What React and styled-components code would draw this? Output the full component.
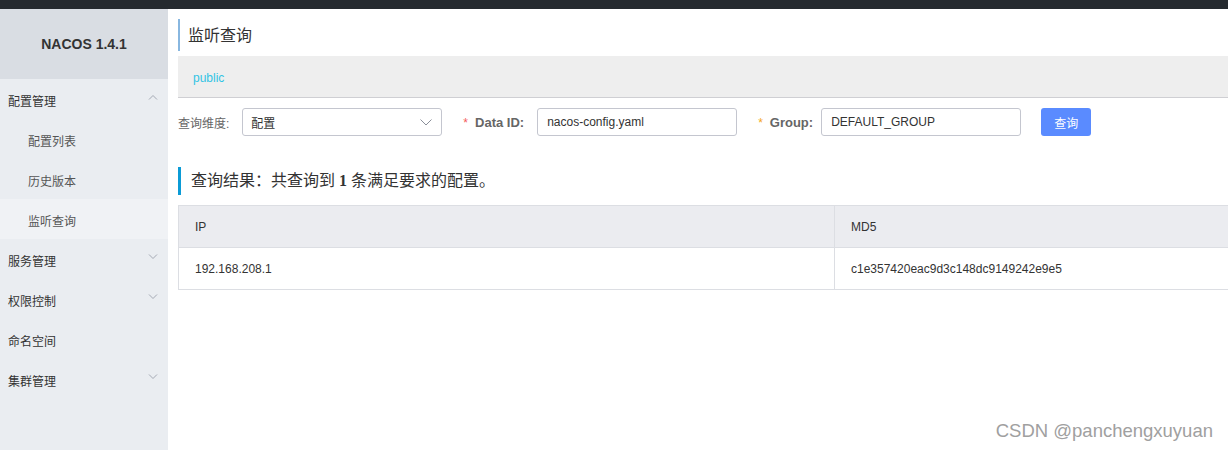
import React from "react";
import styled, { createGlobalStyle } from "styled-components";

const Global = createGlobalStyle`
  html, body { margin: 0; padding: 0; }
  body {
    font-family: "Liberation Sans", "Noto Sans CJK SC", sans-serif;
    color: #333;
    background: #fff;
  }
  * { box-sizing: border-box; }
`;

const Page = styled.div`
  display: flex;
  flex-direction: column;
  height: 450px;
  overflow: hidden;
  position: relative;
`;

const TopBar = styled.div`
  height: 9px;
  background: #252a2f;
  flex-shrink: 0;
`;

const Body = styled.div`
  display: flex;
  flex: 1;
  min-height: 0;
`;

const Sidebar = styled.aside`
  width: 168px;
  flex-shrink: 0;
  background: #eaedf1;
  display: flex;
  flex-direction: column;
`;

const Logo = styled.div`
  height: 70px;
  background: #d9dde3;
  display: flex;
  align-items: center;
  justify-content: center;
  font-weight: bold;
  font-size: 14px;
  color: #333;
  padding-bottom: 1px;
`;

const MenuItem = styled.div`
  height: 40px;
  display: flex;
  align-items: center;
  justify-content: space-between;
  padding-top: 3px;
  padding-left: ${(p) => (p.$sub ? "28px" : "8px")};
  padding-right: 10px;
  font-size: 12px;
  color: ${(p) => (p.$sub ? "#555" : "#333")};
  background: ${(p) => (p.$active ? "#f0f2f5" : "transparent")};
`;

const Chevron = ({ up }) => (
  <svg width="10" height="6" viewBox="0 0 10 6" style={{ marginTop: -8 }}>
    <path
      d={up ? "M1 5.5 L5 1.5 L9 5.5" : "M1 0.5 L5 4.5 L9 0.5"}
      fill="none"
      stroke="#a3a8b3"
      strokeWidth="1"
    />
  </svg>
);

const Main = styled.main`
  flex: 1;
  min-width: 0;
  padding: 10px 0 0 10px;
  overflow: hidden;
`;

const PageTitle = styled.div`
  border-left: 2px solid #88b7e0;
  height: 32px;
  line-height: 33px;
  padding-left: 8px;
  font-size: 16px;
  color: #333;
`;

const NamespaceBar = styled.div`
  margin-top: 5px;
  margin-right: -20px;
  height: 42px;
  background: #eeeeee;
  border-bottom: 1px solid #cfcfd3;
  display: flex;
  align-items: center;
  padding: 3px 0 0 15px;
  font-size: 12px;
  color: #32c4e4;
`;

const Form = styled.div`
  margin-top: 10px;
  display: flex;
  align-items: center;
  height: 28px;
`;

const FormItem = styled.div`
  display: flex;
  align-items: center;
  margin-right: 20px;
`;

const Label = styled.span`
  font-size: ${(p) => (p.$bold ? "13px" : "12px")};
  font-weight: ${(p) => (p.$bold ? "bold" : "normal")};
  color: #666;
  padding-right: ${(p) => p.$pad}px;
  white-space: nowrap;
`;

const Star = styled.span`
  color: ${(p) => p.$color};
  font-size: 12px;
  margin: 0 7px 0 1px;
  font-weight: normal;
`;

const Field = styled.div`
  width: 200px;
  height: 28px;
  border: 1px solid #c4c6cf;
  border-radius: 3px;
  display: flex;
  align-items: center;
  justify-content: space-between;
  padding: 0 9px 0 ${(p) => (p.$select ? "8px" : "9px")};
  font-size: 12px;
  color: #333;
  background: #fff;
`;

const Button = styled.button`
  width: 50px;
  height: 28px;
  border: none;
  border-radius: 3px;
  background: #5a8bff;
  color: #fff;
  font-size: 12px;
  font-family: inherit;
  padding: 0;
`;

const ResultTitle = styled.div`
  margin-top: 31px;
  border-left: 3px solid #0b9bd6;
  height: 28px;
  line-height: 28px;
  padding-left: 10px;
  font-size: 16px;
  color: #333;
  b {
    font-family: "Liberation Serif", serif;
    font-weight: bold;
    margin: 0 4px;
  }
`;

const Table = styled.div`
  margin-top: 10px;
  margin-right: -20px;
  border: 1px solid #dcdee3;
  display: grid;
  grid-template-columns: 656px 1fr;
`;

const Cell = styled.div`
  height: ${(p) => (p.$head ? "42px" : "41px")};
  display: flex;
  align-items: center;
  padding-left: 16px;
  font-size: 12px;
  color: #333;
  background: ${(p) => (p.$head ? "#ebecf0" : "#fff")};
  border-bottom: ${(p) => (p.$head ? "1px solid #dcdee3" : "none")};
  border-right: ${(p) => (p.$first ? "1px solid #dcdee3" : "none")};
`;

const Watermark = styled.div`
  position: absolute;
  right: 15px;
  bottom: 8px;
  font-size: 18.5px;
  color: #a0a0a0;
  font-family: "Liberation Sans", sans-serif;
`;

const menu = [
  { label: "配置管理", chevron: "up" },
  { label: "配置列表", sub: true },
  { label: "历史版本", sub: true },
  { label: "监听查询", sub: true, active: true },
  { label: "服务管理", chevron: "down" },
  { label: "权限控制", chevron: "down" },
  { label: "命名空间" },
  { label: "集群管理", chevron: "down" },
];

export default function App() {
  return (
    <Page>
      <Global />
      <TopBar />
      <Body>
        <Sidebar>
          <Logo>NACOS 1.4.1</Logo>
          {menu.map((m) => (
            <MenuItem key={m.label} $sub={m.sub} $active={m.active}>
              <span>{m.label}</span>
              {m.chevron && <Chevron up={m.chevron === "up"} />}
            </MenuItem>
          ))}
        </Sidebar>
        <Main>
          <PageTitle>监听查询</PageTitle>
          <NamespaceBar>public</NamespaceBar>
          <Form>
            <FormItem>
              <Label $pad={13}>查询维度:</Label>
              <Field $select>
                <span>配置</span>
                <svg width="12" height="7" viewBox="0 0 12 7">
                  <path d="M0.5 0.5 L6 6 L11.5 0.5" fill="none" stroke="#8a8f99" strokeWidth="1" />
                </svg>
              </Field>
            </FormItem>
            <FormItem>
              <Label $bold $pad={13}>
                <Star $color="#f45b5b">*</Star>Data ID:
              </Label>
              <Field>nacos-config.yaml</Field>
            </FormItem>
            <FormItem>
              <Label $bold $pad={8}>
                <Star $color="#f5a623">*</Star>Group:
              </Label>
              <Field>DEFAULT_GROUP</Field>
            </FormItem>
            <Button>查询</Button>
          </Form>
          <ResultTitle>
            查询结果：共查询到<b>1</b>条满足要求的配置。
          </ResultTitle>
          <Table>
            <Cell $head $first>IP</Cell>
            <Cell $head>MD5</Cell>
            <Cell $first>192.168.208.1</Cell>
            <Cell>c1e357420eac9d3c148dc9149242e9e5</Cell>
          </Table>
        </Main>
      </Body>
      <Watermark>CSDN @panchengxuyuan</Watermark>
    </Page>
  );
}
